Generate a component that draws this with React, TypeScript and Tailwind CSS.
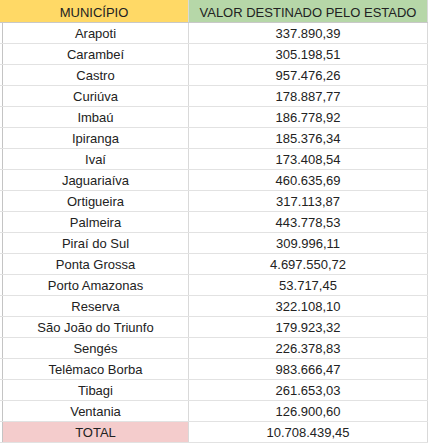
const rows: [string, string][] = [
  ["Arapoti", "337.890,39"],
  ["Carambeí", "305.198,51"],
  ["Castro", "957.476,26"],
  ["Curiúva", "178.887,77"],
  ["Imbaú", "186.778,92"],
  ["Ipiranga", "185.376,34"],
  ["Ivaí", "173.408,54"],
  ["Jaguariaíva", "460.635,69"],
  ["Ortigueira", "317.113,87"],
  ["Palmeira", "443.778,53"],
  ["Piraí do Sul", "309.996,11"],
  ["Ponta Grossa", "4.697.550,72"],
  ["Porto Amazonas", "53.717,45"],
  ["Reserva", "322.108,10"],
  ["São João do Triunfo", "179.923,32"],
  ["Sengés", "226.378,83"],
  ["Telêmaco Borba", "983.666,47"],
  ["Tibagi", "261.653,03"],
  ["Ventania", "126.900,60"],
];

function Row({ name, value, total }: { name: string; value: string; total?: boolean }) {
  return (
    <div className="flex h-[21px] border-b border-[#e2e2e2]">
      <div
        className={
          total
            ? "ml-[2px] w-[187px] border-x border-l-[#c4c4c4] border-r-[#d9d9d9] bg-[#f4cccc] pt-[2px] text-center leading-[17px]"
            : "ml-[2px] w-[187px] border-x border-l-[#c4c4c4] border-r-[#d9d9d9] pt-[2px] text-center leading-[17px]"
        }
      >
        {name}
      </div>
      <div className="w-[239px] border-r border-[#d9d9d9] pt-[2px] text-center leading-[17px]">{value}</div>
    </div>
  );
}

export default function App() {
  return (
    <div className="h-[444px] w-[428px] bg-white font-['Liberation_Sans',Arial,sans-serif] text-[13px] text-[#222222]">
      <div className="flex h-[23px] border-b border-[#c8c8c8]">
        <div className="w-[189px] border-r border-[#d9d9d9] bg-[#ffd966] pt-[4px] text-center leading-[17px]">
          MUNICÍPIO
        </div>
        <div className="w-[239px] border-r border-[#d9d9d9] bg-[#b6d7a8] pt-[4px] text-center leading-[17px]">
          VALOR DESTINADO PELO ESTADO
        </div>
      </div>
      {rows.map(([name, value]) => (
        <Row key={name} name={name} value={value} />
      ))}
      <Row name="TOTAL" value="10.708.439,45" total />
    </div>
  );
}
